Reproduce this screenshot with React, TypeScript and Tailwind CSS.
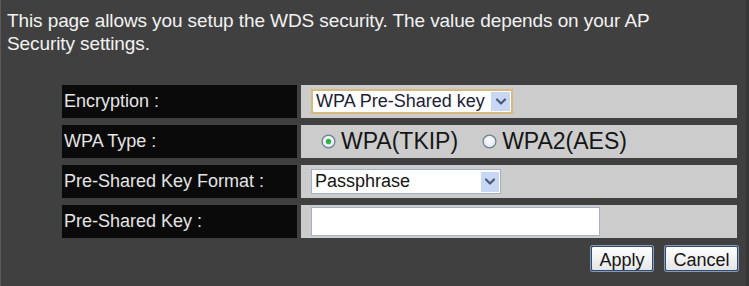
import React from "react";

function Chevron() {
  return (
    <svg width="10" height="7" viewBox="0 0 10 7">
      <path d="M1 1.5 L5 5.5 L9 1.5" fill="none" stroke="#4a5a78" strokeWidth="2.2" strokeLinecap="round" strokeLinejoin="round" />
    </svg>
  );
}

function Radio({ checked }: { checked?: boolean }) {
  return (
    <svg width="15" height="15" viewBox="0 0 15 15">
      <defs>
        <radialGradient id={checked ? "rg1" : "rg2"} cx="50%" cy="40%" r="60%">
          <stop offset="0%" stopColor="#ffffff" />
          <stop offset="100%" stopColor="#dde3ea" />
        </radialGradient>
      </defs>
      <circle cx="7.5" cy="7.5" r="6.4" fill={`url(#${checked ? "rg1" : "rg2"})`} stroke="#6f7e8e" strokeWidth="1.2" />
      {checked && <circle cx="7.5" cy="7.5" r="2.7" fill="#2fb34a" />}
    </svg>
  );
}

function Row({ label, children }: { label: string; children: React.ReactNode }) {
  return (
    <div className="flex gap-[4px] h-[33px]">
      <div className="w-[235px] bg-[#0a0a0a] flex items-center pl-[2px] text-[18px] text-[#e4e4e4]">
        {label}
      </div>
      <div className="flex-1 bg-[#cccccc] flex items-center pl-[10px]">{children}</div>
    </div>
  );
}

export default function App() {
  return (
    <div
      className="w-[749px] h-[286px] bg-[#404040] overflow-hidden border-l border-[#5a5a5a] border-r-[3px] border-r-[#363636]"
      style={{ fontFamily: '"Liberation Sans", Arial, sans-serif' }}
    >
      <p className="pl-[6px] pt-[9px] text-[19px] leading-[23px] text-[#f2f2f2] tracking-[-0.1px]">
        This page allows you setup the WDS security. The value depends on your AP
        <br />
        Security settings.
      </p>
      <div className="ml-[61px] w-[675px] mt-[30px] flex flex-col gap-[7px]">
        <Row label="Encryption :">
          <div className="h-[25px] w-[202px] bg-white border-2 border-[#d6b97c] flex items-center justify-between pl-[3px] pr-[1px] text-[18px] text-[#1c2035]">
            <span>WPA Pre-Shared key</span>
            <span className="w-[19px] h-[19px] bg-[#c8d8f4] flex items-center justify-center">
              <Chevron />
            </span>
          </div>
        </Row>
        <Row label="WPA Type :">
          <div className="flex items-center text-[23px] text-[#151515] pl-[10px]">
            <Radio checked />
            <span className="ml-[5px]">WPA(TKIP)</span>
            <span className="ml-[24px] flex"><Radio /></span>
            <span className="ml-[5px]">WPA2(AES)</span>
          </div>
        </Row>
        <Row label="Pre-Shared Key Format :">
          <div className="h-[25px] w-[190px] bg-white border border-[#9fb0c8] flex items-center justify-between pl-[3px] pr-[1px] text-[18px] text-[#151515]">
            <span>Passphrase</span>
            <span className="w-[18px] h-[20px] bg-[#c8d8f4] flex items-center justify-center">
              <Chevron />
            </span>
          </div>
        </Row>
        <Row label="Pre-Shared Key :">
          <div className="h-[29px] w-[289px] bg-white border border-[#a4b2c6]" />
        </Row>
      </div>
      <div className="w-[737px] flex justify-end gap-[12px] mt-[8px]">
        <button className="h-[25px] w-[62px] border border-[#2d4a78] rounded-[2px] bg-gradient-to-b from-[#ffffff] to-[#e6e6e6] text-[18px] text-[#151515] shadow-[0_0_0_1px_#8a9ab0]">
          Apply
        </button>
        <button className="h-[25px] w-[73px] border border-[#2d4a78] rounded-[2px] bg-gradient-to-b from-[#ffffff] to-[#e6e6e6] text-[18px] text-[#151515] shadow-[0_0_0_1px_#8a9ab0]">
          Cancel
        </button>
      </div>
    </div>
  );
}
